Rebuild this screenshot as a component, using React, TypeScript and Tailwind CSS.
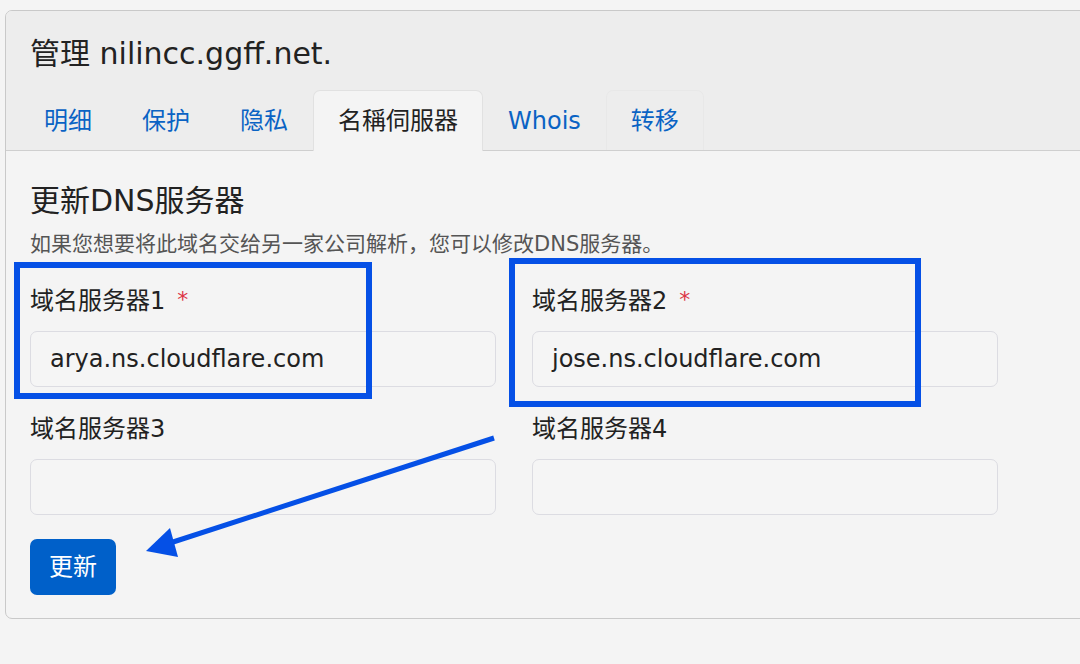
import React from "react";

const font = { fontFamily: '"DejaVu Sans", "Noto Sans CJK SC", sans-serif' };

function Tab({ label, active, faint }: { label: string; active?: boolean; faint?: boolean }) {
  return (
    <div
      className={
        "h-[60px] px-[24px] flex items-center text-[24px] border border-b-0 rounded-t-[7px] " +
        (active
          ? "bg-[#f4f4f4] border-[#e1e1e1] text-[#222222] -mb-px h-[61px]"
          : faint
          ? "border-[#e8e8e8] text-[#0a63c4]"
          : "border-transparent text-[#0a63c4]")
      }
    >
      {label}
    </div>
  );
}

function Field({ label, required, value }: { label: string; required?: boolean; value?: string }) {
  return (
    <div className="flex flex-col">
      <div className="h-[32px] leading-[32px] text-[24px] text-[#222222] flex items-center">
        <span>{label}</span>
        {required && <span className="ml-[12px] text-[#dc3545] text-[22px] self-start leading-[30px]">*</span>}
      </div>
      <div className="mt-[14px] h-[56px] rounded-[7px] border border-[#dcdce2] bg-[#f5f5f5] flex items-center pl-[19px] text-[24px] text-[#222222]">
        {value}
      </div>
    </div>
  );
}

export default function App() {
  return (
    <div className="relative w-[1080px] h-[664px] overflow-hidden bg-[#f4f4f4] pt-[10px] pl-[5px]" style={font}>
      <div className="w-[1100px] h-[609px] border border-[#c9c9c9] rounded-[7px] bg-[#f4f4f4] overflow-hidden flex flex-col">
        <div className="bg-[#ededed] border-b border-[#cfcfcf] pt-[25px] pl-[13px] flex flex-col">
          <div className="pl-[11px] h-[36px] leading-[36px] text-[30px] text-[#222222]">管理 nilincc.ggff.net.</div>
          <div className="mt-[18px] h-[60px] flex items-start">
            <Tab label="明细" />
            <Tab label="保护" />
            <Tab label="隐私" />
            <Tab label="名稱伺服器" active />
            <Tab label="Whois" />
            <Tab label="转移" faint />
          </div>
        </div>
        <div className="pl-[24px] pt-[32px] flex flex-col">
          <div className="h-[36px] leading-[36px] text-[30px] text-[#222222]">更新DNS服务器</div>
          <div className="mt-[11px] h-[28px] leading-[28px] text-[21px] text-[#555555]">
            如果您想要将此域名交给另一家公司解析，您可以修改DNS服务器。
          </div>
          <div className="mt-[27px] grid grid-cols-[466px_466px] gap-x-[36px] gap-y-[26px]">
            <Field label="域名服务器1" required value="arya.ns.cloudflare.com" />
            <Field label="域名服务器2" required value="jose.ns.cloudflare.com" />
            <Field label="域名服务器3" />
            <Field label="域名服务器4" />
          </div>
          <div className="mt-[24px]">
            <button className="h-[56px] px-[19px] rounded-[7px] bg-[#0060c9] text-white text-[24px]">更新</button>
          </div>
        </div>
      </div>
      <svg className="absolute left-0 top-0 pointer-events-none" width="1080" height="664" viewBox="0 0 1080 664">
        <rect x="17" y="265" width="352" height="131" fill="none" stroke="#0550e6" strokeWidth="6" />
        <rect x="512" y="261" width="406" height="143" fill="none" stroke="#0550e6" strokeWidth="6" />
        <line x1="494" y1="438" x2="170" y2="543" stroke="#0550e6" strokeWidth="5" />
        <polygon points="146,551 170,528 178,557" fill="#0550e6" />
      </svg>
    </div>
  );
}
